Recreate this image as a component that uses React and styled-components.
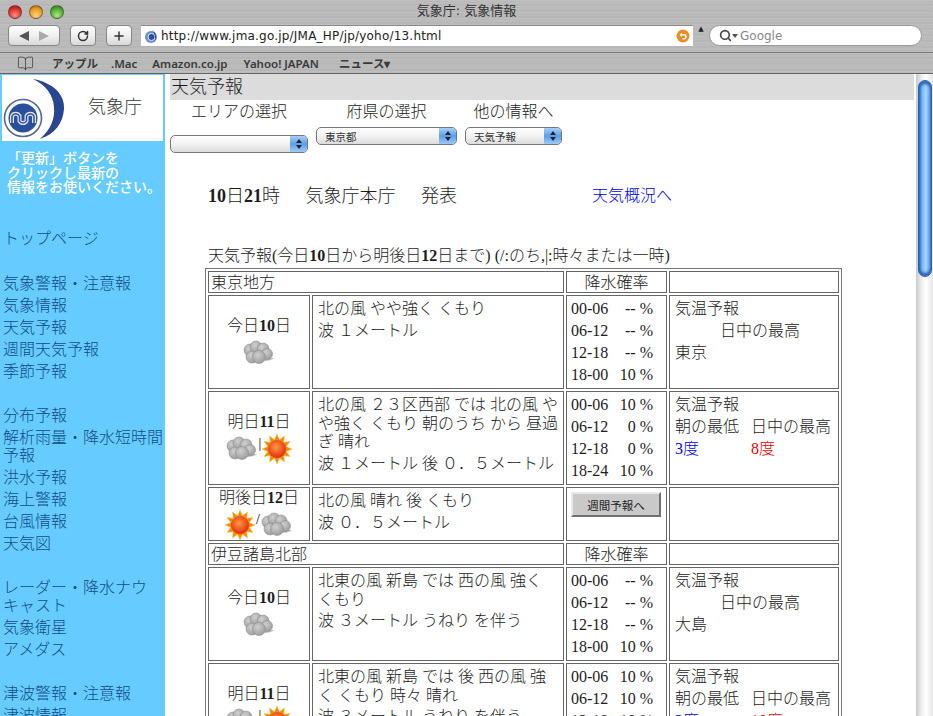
import React from 'react'
import styled, { createGlobalStyle } from 'styled-components'
import { RotateCw, Plus, Search, BookOpen } from 'lucide-react'

const MINCHO = `"Liberation Serif", "Noto Sans CJK JP", serif`
const GOTHIC = `"DejaVu Sans", "Noto Sans CJK JP", sans-serif`

const GlobalStyle = createGlobalStyle`
  html, body { margin: 0; padding: 0; background: #fff; overflow: hidden; }
  * { box-sizing: border-box; }
`

const Page = styled.div`
  width: 933px;
  height: 716px;
  overflow: hidden;
  display: flex;
  flex-direction: column;
  font-family: ${MINCHO};
  font-weight: 300;
  color: #1c1c1c;
`

// --- browser chrome ---
const metal = `repeating-linear-gradient(180deg, #c0c0c0 0px, #b8b8b8 2px, #bdbdbd 3px, #b4b4b4 5px, #bbbbbb 6px)`

const TitleBar = styled.div`
  height: 24px;
  flex: none;
  position: relative;
  display: flex;
  align-items: center;
  justify-content: center;
  background: ${metal};
  font: 13px ${GOTHIC};
  color: #333;
  padding-bottom: 5px;
`
const Lights = styled.div`
  position: absolute;
  left: 8px;
  top: 5px;
  display: flex;
  gap: 7px;
`
const Light = styled.span`
  width: 14px;
  height: 14px;
  border-radius: 50%;
  border: 1px solid rgba(60, 60, 60, 0.55);
  background: radial-gradient(circle at 50% 78%, ${p => p.$glow} 0%, ${p => p.$color} 60%, ${p => p.$dark} 100%);
`
const Toolbar = styled.div`
  height: 29px;
  flex: none;
  display: flex;
  align-items: flex-start;
  padding: 1px 0 0 8px;
  background: ${metal};
  border-bottom: 1px solid #7c7c7c;
`
const ToolButton = styled.div`
  width: ${p => p.$w}px;
  height: 21px;
  margin-right: ${p => p.$mr}px;
  display: flex;
  align-items: center;
  justify-content: center;
  gap: 10px;
  color: #333;
  border: 1px solid #868686;
  border-radius: 4px;
  background: linear-gradient(180deg, #fdfdfd 0%, #f0f0f0 50%, #d8d8d8 100%);
`
const Tri = styled.span`
  width: 0;
  height: 0;
  border-top: 5px solid transparent;
  border-bottom: 5px solid transparent;
  ${p => p.$left ? `border-right: 10px solid #555;` : `border-left: 10px solid #aaa;`}
`
const UrlField = styled.div`
  width: 552px;
  height: 21px;
  display: flex;
  align-items: center;
  padding: 0 3px;
  background: #fff;
  border-top: 1px solid #8a8a8a;
  font: 12px ${GOTHIC};
  letter-spacing: 0.2px;
  color: #222;
`
const UrlText = styled.span`
  margin-left: 2px;
  flex: 1;
`
const SearchArrow = styled.span`
  width: 16px;
  text-align: center;
  font: 7px ${GOTHIC};
  color: #222;
`
const SearchField = styled.div`
  width: 213px;
  height: 21px;
  display: flex;
  align-items: center;
  gap: 1px;
  padding-left: 9px;
  border-radius: 11px;
  background: #fff;
  border: 1px solid #999;
  font: 12px ${GOTHIC};
  color: #888;
`
const Caret = styled.span`
  width: 0;
  height: 0;
  margin: 0 1px 0 -1px;
  border-left: 3px solid transparent;
  border-right: 3px solid transparent;
  border-top: 4px solid #555;
`
const Bookmarks = styled.div`
  height: 21px;
  flex: none;
  display: flex;
  align-items: center;
  padding-left: 17px;
  background: ${metal};
  border-bottom: 1px solid #666;
  font: 600 11.5px "Noto Sans", "Noto Sans CJK JP", sans-serif;
  color: #3a3a3a;
`
const Mark = styled.span`
  margin-left: ${p => p.$ml}px;
  white-space: nowrap;
`

// --- page body ---
const Body = styled.div`
  flex: 1;
  display: flex;
  min-height: 0;
`
const Sidebar = styled.aside`
  width: 165px;
  flex: none;
  background: #66ccff;
  padding-top: 1px;
`
const LogoBox = styled.div`
  height: 66px;
  margin: 0 2px;
  display: flex;
  background: #fff;
`
const LogoName = styled.div`
  margin: 22px 0 0 20px;
  font-size: 18px;
  line-height: 20px;
  color: #333;
`
const Notice = styled.p`
  margin: 9px 0 0 7px;
  font: 500 14px/14.5px "Noto Sans CJK JP", sans-serif;
  color: #fff;
  white-space: pre-line;
`
const NavList = styled.nav`
  margin: 36px 0 0 3px;
  width: 161px;
`
const NavLink = styled.div`
  font-size: 16px;
  line-height: 18px;
  margin-bottom: ${p => p.$gap || 4}px;
  color: #114c88;
  white-space: pre-line;
`
const Main = styled.main`
  width: 744px;
  margin-left: 5px;
  flex: none;
`
const Heading = styled.h1`
  margin: 0;
  height: 26px;
  padding-left: 1px;
  background: #dcdcdc;
  font-size: 18px;
  font-weight: 300;
  line-height: 26px;
`
const Filters = styled.div`
  display: flex;
  gap: 8px;
  padding-top: 2px;
`
const Filter = styled.div`
  width: ${p => p.$w}px;
  text-align: center;
  font-size: 16px;
  line-height: 20px;
`
const SelectBox = styled.div`
  margin-top: ${p => p.$low ? 13 : 5}px;
  height: 18px;
  display: flex;
  align-items: center;
  justify-content: space-between;
  padding-left: 8px;
  text-align: left;
  border: 1px solid #777;
  border-radius: 5px;
  overflow: hidden;
  background: linear-gradient(180deg, #fff 0%, #f4f4f4 45%, #dcdcdc 100%);
  font: 10.5px "Noto Sans CJK JP", sans-serif;
  color: #333;
`
const SelectArrows = styled.span`
  width: 17px;
  height: 100%;
  display: flex;
  flex-direction: column;
  align-items: center;
  justify-content: center;
  gap: 2px;
  background: linear-gradient(180deg, #a8d0f8 0%, #5b9fe8 50%, #9ccbf7 100%);
  &::before, &::after {
    content: '';
    border-left: 3px solid transparent;
    border-right: 3px solid transparent;
  }
  &::before { border-bottom: 4px solid #223; }
  &::after { border-top: 4px solid #223; }
`
const Issued = styled.div`
  display: flex;
  gap: 25.5px;
  margin: 31px 0 0 38px;
  font-size: 18px;
  line-height: 24px;
  b { font-weight: 700; }
`
const SummaryLink = styled.span`
  margin-left: 109.5px;
  font-size: 16px;
  color: #0000ee;
`
const Caption = styled.div`
  margin: 38px 0 0 38px;
  font-size: 16px;
  line-height: 20px;
  white-space: pre;
  b { font-weight: 700; }
`
const Table = styled.table`
  table-layout: fixed;
  width: 637px;
  margin: 2px 0 0 35px;
  border: 1px solid #777;
  border-spacing: 2px;
  font-size: 16px;
`
const Cell = styled.td`
  height: ${p => p.$h}px;
  padding: ${p => p.$pad || '0 2px'};
  border: 1px solid #666;
  vertical-align: ${p => p.$top ? 'top' : 'middle'};
  text-align: ${p => p.$center ? 'center' : 'left'};
  line-height: 19px;
  b { font-weight: 700; }
`
const Para = styled.p`
  margin: 0 0 3px;
  line-height: 18.5px;
`
const ChanceRow = styled.div`
  width: 82px;
  display: flex;
  justify-content: space-between;
  line-height: 22px;
`
const TempLine = styled.div`
  display: grid;
  grid-template-columns: ${p => p.$indent ? '45px' : '76px'} 1fr;
  line-height: 22px;
  min-height: 22px;
`
const Temp = styled.span`
  color: ${p => p.$color};
`
const IconRow = styled.div`
  height: 30px;
  display: flex;
  align-items: center;
  justify-content: center;
  margin-top: 3px;
`
const Sep = styled.span`
  font-size: 14px;
  font-weight: 400;
  line-height: 14px;
  margin: -10px 1px 0;
  color: #000;
`
const WeekButton = styled.div`
  width: 90px;
  height: 25px;
  margin-top: 2px;
  display: flex;
  align-items: center;
  justify-content: center;
  background: #c9c9c9;
  border: 2px solid;
  border-color: #e8e8e8 #707070 #707070 #e8e8e8;
  font: 11.5px "Noto Sans CJK JP", sans-serif;
  color: #222;
`
const Scrollbar = styled.div`
  width: 17px;
  margin-left: 2px;
  flex: none;
  padding: 6px 1px 0 2px;
  background: linear-gradient(90deg, #c8c8c8 0%, #f2f2f2 35%, #fff 60%, #e6e6e6 100%);
`
const Thumb = styled.div`
  height: 197px;
  border-radius: 7px;
  border: 1px solid #2a5fb0;
  box-shadow: inset 0 3px 3px #2a62b8, inset 0 -3px 3px #2a62b8;
  background: linear-gradient(90deg, #3f7fd8 0%, #7fbcf4 30%, #a6d4fa 55%, #5da2ea 100%);
`

// --- drawings ---
const CloudIcon = () => (
  <svg width="32" height="26" viewBox="0 0 32 26">
    <defs>
      <radialGradient id="puff" cx="40%" cy="35%" r="70%">
        <stop offset="0%" stopColor="#cfcfcf" />
        <stop offset="100%" stopColor="#9a9a9a" />
      </radialGradient>
    </defs>
    <path d="M20 18 L31 18 Q28 21 21 21 Z" fill="#bdbdbd" />
    {[[7, 10, 6], [13, 7, 6], [20, 9, 6], [24, 14, 5.5], [9, 17, 6], [16, 17, 6.5]].map(([cx, cy, r]) => (
      <circle key={`${cx}-${cy}`} cx={cx} cy={cy} r={r} fill="url(#puff)" stroke="#8f8f8f" strokeWidth="0.6" />
    ))}
  </svg>
)

const rays = Array.from({ length: 24 }, (_, i) => {
  const a = (i * Math.PI) / 12
  const r = i % 2 === 0 ? 15 : 9.5
  return `${(15 + r * Math.sin(a)).toFixed(1)},${(15 - r * Math.cos(a)).toFixed(1)}`
}).join(' ')

const SunIcon = () => (
  <svg width="30" height="30" viewBox="0 0 30 30">
    <defs>
      <radialGradient id="sun" cx="45%" cy="40%" r="60%">
        <stop offset="0%" stopColor="#ff9a40" />
        <stop offset="100%" stopColor="#e02c10" />
      </radialGradient>
    </defs>
    <polygon points={rays} fill="#f58a0a" stroke="#fbc64a" strokeWidth="0.6" />
    <circle cx="15" cy="15" r="9" fill="url(#sun)" />
  </svg>
)

const JmaLogo = ({ size }) => (
  <svg width={size} height={size} viewBox="0 0 66 66">
    <path d="M31 4 C52 8 63 20 62 34 C61 48 53 59 38 64 C49 54 53 44 52 32 C51 20 44 10 31 4 Z" fill="#27468f" />
    <circle cx="21" cy="43" r="18.5" fill="none" stroke="#54698f" strokeWidth="1.6" />
    <circle cx="21" cy="43" r="14.5" fill="#2c4f9c" />
    <path d="M10 48 V41 a4.2 4.2 0 0 1 7.5 0 V46 a4 4 0 0 0 7 0 V41 a4.2 4.2 0 0 1 7.5 0 V48" fill="none" stroke="#dfe7f5" strokeWidth="4" />
    <path d="M10 48 V41 a4.2 4.2 0 0 1 7.5 0 V46 a4 4 0 0 0 7 0 V41 a4.2 4.2 0 0 1 7.5 0 V48" fill="none" stroke="#2c4f9c" strokeWidth="1.5" />
  </svg>
)

const Favicon = () => (
  <svg width="15" height="15" viewBox="0 0 15 15">
    <circle cx="7" cy="8" r="6" fill="#6f8fd0" />
    <circle cx="7.5" cy="8" r="3.5" fill="#2c4f9c" stroke="#dfe8f6" />
    <path d="M8 1 Q15 6 10 14 Q13 7 8 1 Z" fill="#27468f" />
  </svg>
)

const OrangeBack = () => (
  <svg width="14" height="14" viewBox="0 0 14 14">
    <circle cx="7" cy="7" r="6.5" fill="#f08a24" />
    <path d="M3.5 6 L6 3.5 V5 H8 a2.6 2.6 0 0 1 0 5.5 H6.5 V9 H8 a1.2 1.2 0 0 0 0-2.6 H6 V8 Z" fill="#fff" />
  </svg>
)

// --- data ---
const nav = [
  { t: 'トップページ', gap: 27 },
  { t: '気象警報・注意報' }, { t: '気象情報' }, { t: '天気予報' }, { t: '週間天気予報' }, { t: '季節予報', gap: 26 },
  { t: '分布予報' }, { t: '解析雨量・降水短時間予報' }, { t: '洪水予報' }, { t: '海上警報' }, { t: '台風情報' }, { t: '天気図', gap: 26 },
  { t: 'レーダー・降水ナウ\nキャスト' }, { t: '気象衛星' }, { t: 'アメダス', gap: 26 },
  { t: '津波警報・注意報' }, { t: '津波情報' },
]

const Chance = ({ rows }) => rows.map(([time, value]) => (
  <ChanceRow key={time}><span>{time}</span><span>{value} %</span></ChanceRow>
))

const TempToday = ({ place }) => (
  <>
    <TempLine><span>気温予報</span></TempLine>
    <TempLine $indent><span /><span>日中の最高</span></TempLine>
    <TempLine><span>{place}</span></TempLine>
  </>
)

const TempTomorrow = ({ low, high }) => (
  <>
    <TempLine><span>気温予報</span></TempLine>
    <TempLine><span>朝の最低</span><span>日中の最高</span></TempLine>
    <TempLine><Temp $color="#0000ee">{low}</Temp><Temp $color="#ee0000">{high}</Temp></TempLine>
  </>
)

const Section = ({ name }) => (
  <tr>
    <Cell colSpan={2} $h={22}>{name}</Cell>
    <Cell $center>降水確率</Cell>
    <Cell />
  </tr>
)

const Row = ({ h, date, icons, wind, wave, chance, children }) => (
  <tr>
    <Cell $h={h} $center $pad="0">
      {date}
      {icons}
    </Cell>
    <Cell $h={h} $top $pad="4px 5px 0">
      <Para>{wind}</Para>
      <Para>{wave}</Para>
    </Cell>
    <Cell $h={h} $top $pad="2px 4px">{chance}</Cell>
    <Cell $h={h} $top $pad="2px 5px">{children}</Cell>
  </tr>
)

const today = <span>今日<b>10</b>日</span>
const tomorrow = <span>明日<b>11</b>日</span>

const App = () => {
  return (
    <Page>
      <GlobalStyle />
      <TitleBar>
        <Lights>
          <Light $color="#dc3028" $glow="#ff8a80" $dark="#8c1410" />
          <Light $color="#eb9a20" $glow="#ffd080" $dark="#a05c08" />
          <Light $color="#50ac30" $glow="#a8e880" $dark="#2a7010" />
        </Lights>
        気象庁: 気象情報
      </TitleBar>
      <Toolbar>
        <ToolButton $w={52} $mr={10}><Tri $left /><Tri /></ToolButton>
        <ToolButton $w={26} $mr={10}><RotateCw size={12} strokeWidth={3} /></ToolButton>
        <ToolButton $w={26} $mr={9}><Plus size={14} strokeWidth={2.5} /></ToolButton>
        <UrlField>
          <Favicon />
          <UrlText>http://www.jma.go.jp/JMA_HP/jp/yoho/13.html</UrlText>
          <OrangeBack />
        </UrlField>
        <SearchArrow>▲</SearchArrow>
        <SearchField>
          <Search size={13} strokeWidth={3} color="#444" />
          <Caret />
          Google
        </SearchField>
      </Toolbar>
      <Bookmarks>
        <BookOpen size={17} strokeWidth={1} color="#333" />
        <Mark $ml={18}>アップル</Mark>
        <Mark $ml={13}>.Mac</Mark>
        <Mark $ml={15}>Amazon.co.jp</Mark>
        <Mark $ml={16}>Yahoo! JAPAN</Mark>
        <Mark $ml={20}>ニュース▾</Mark>
      </Bookmarks>
      <Body>
        <Sidebar>
          <LogoBox>
            <JmaLogo size={66} />
            <LogoName>気象庁</LogoName>
          </LogoBox>
          <Notice>{'「更新」ボタンを\nクリックし最新の\n情報をお使いください。'}</Notice>
          <NavList>
            {nav.map(item => <NavLink key={item.t} $gap={item.gap}>{item.t}</NavLink>)}
          </NavList>
        </Sidebar>
        <Main>
          <Heading>天気予報</Heading>
          <Filters>
            <Filter $w={138}>エリアの選択<SelectBox $low><span /><SelectArrows /></SelectBox></Filter>
            <Filter $w={141}>府県の選択<SelectBox><span>東京都</span><SelectArrows /></SelectBox></Filter>
            <Filter $w={97}>他の情報へ<SelectBox><span>天気予報</span><SelectArrows /></SelectBox></Filter>
          </Filters>
          <Issued>
            <span><b>10</b>日<b>21</b>時</span>
            <span>気象庁本庁</span>
            <span>発表</span>
            <SummaryLink>天気概況へ</SummaryLink>
          </Issued>
          <Caption>天気予報(今日<b>10</b>日から明後日<b>12</b>日まで) (/:のち,|:時々または一時)</Caption>
          <Table>
            <colgroup>
              <col width="102" /><col width="252" /><col width="101" /><col width="170" />
            </colgroup>
            <tbody>
              <Section name="東京地方" />
              <Row
                h={94}
                date={today}
                icons={<IconRow><CloudIcon /></IconRow>}
                wind="北の風 やや強く くもり"
                wave="波 １メートル"
                chance={<Chance rows={[['00-06', '--'], ['06-12', '--'], ['12-18', '--'], ['18-00', '10']]} />}
              >
                <TempToday place="東京" />
              </Row>
              <Row
                h={94}
                date={tomorrow}
                icons={<IconRow><CloudIcon /><Sep>|</Sep><SunIcon /></IconRow>}
                wind="北の風 ２３区西部 では 北の風 やや強く くもり 朝のうち から 昼過ぎ 晴れ"
                wave="波 １メートル 後 ０．５メートル"
                chance={<Chance rows={[['00-06', '10'], ['06-12', '0'], ['12-18', '0'], ['18-24', '10']]} />}
              >
                <TempTomorrow low="3度" high="8度" />
              </Row>
              <Row
                h={54}
                date={<span>明後日<b>12</b>日</span>}
                icons={<IconRow><SunIcon /><Sep>/</Sep><CloudIcon /></IconRow>}
                wind="北の風 晴れ 後 くもり"
                wave="波 ０．５メートル"
                chance={<WeekButton>週間予報へ</WeekButton>}
              />
              <Section name="伊豆諸島北部" />
              <Row
                h={94}
                date={today}
                icons={<IconRow><CloudIcon /></IconRow>}
                wind="北東の風 新島 では 西の風 強く くもり"
                wave="波 ３メートル うねり を伴う"
                chance={<Chance rows={[['00-06', '--'], ['06-12', '--'], ['12-18', '--'], ['18-00', '10']]} />}
              >
                <TempToday place="大島" />
              </Row>
              <Row
                h={94}
                date={tomorrow}
                icons={<IconRow><CloudIcon /><Sep>|</Sep><SunIcon /></IconRow>}
                wind="北東の風 新島 では 後 西の風 強く くもり 時々 晴れ"
                wave="波 ３メートル うねり を伴う"
                chance={<Chance rows={[['00-06', '10'], ['06-12', '10'], ['12-18', '10'], ['18-24', '10']]} />}
              >
                <TempTomorrow low="3度" high="10度" />
              </Row>
            </tbody>
          </Table>
        </Main>
        <Scrollbar><Thumb /></Scrollbar>
      </Body>
    </Page>
  )
}

export default App
